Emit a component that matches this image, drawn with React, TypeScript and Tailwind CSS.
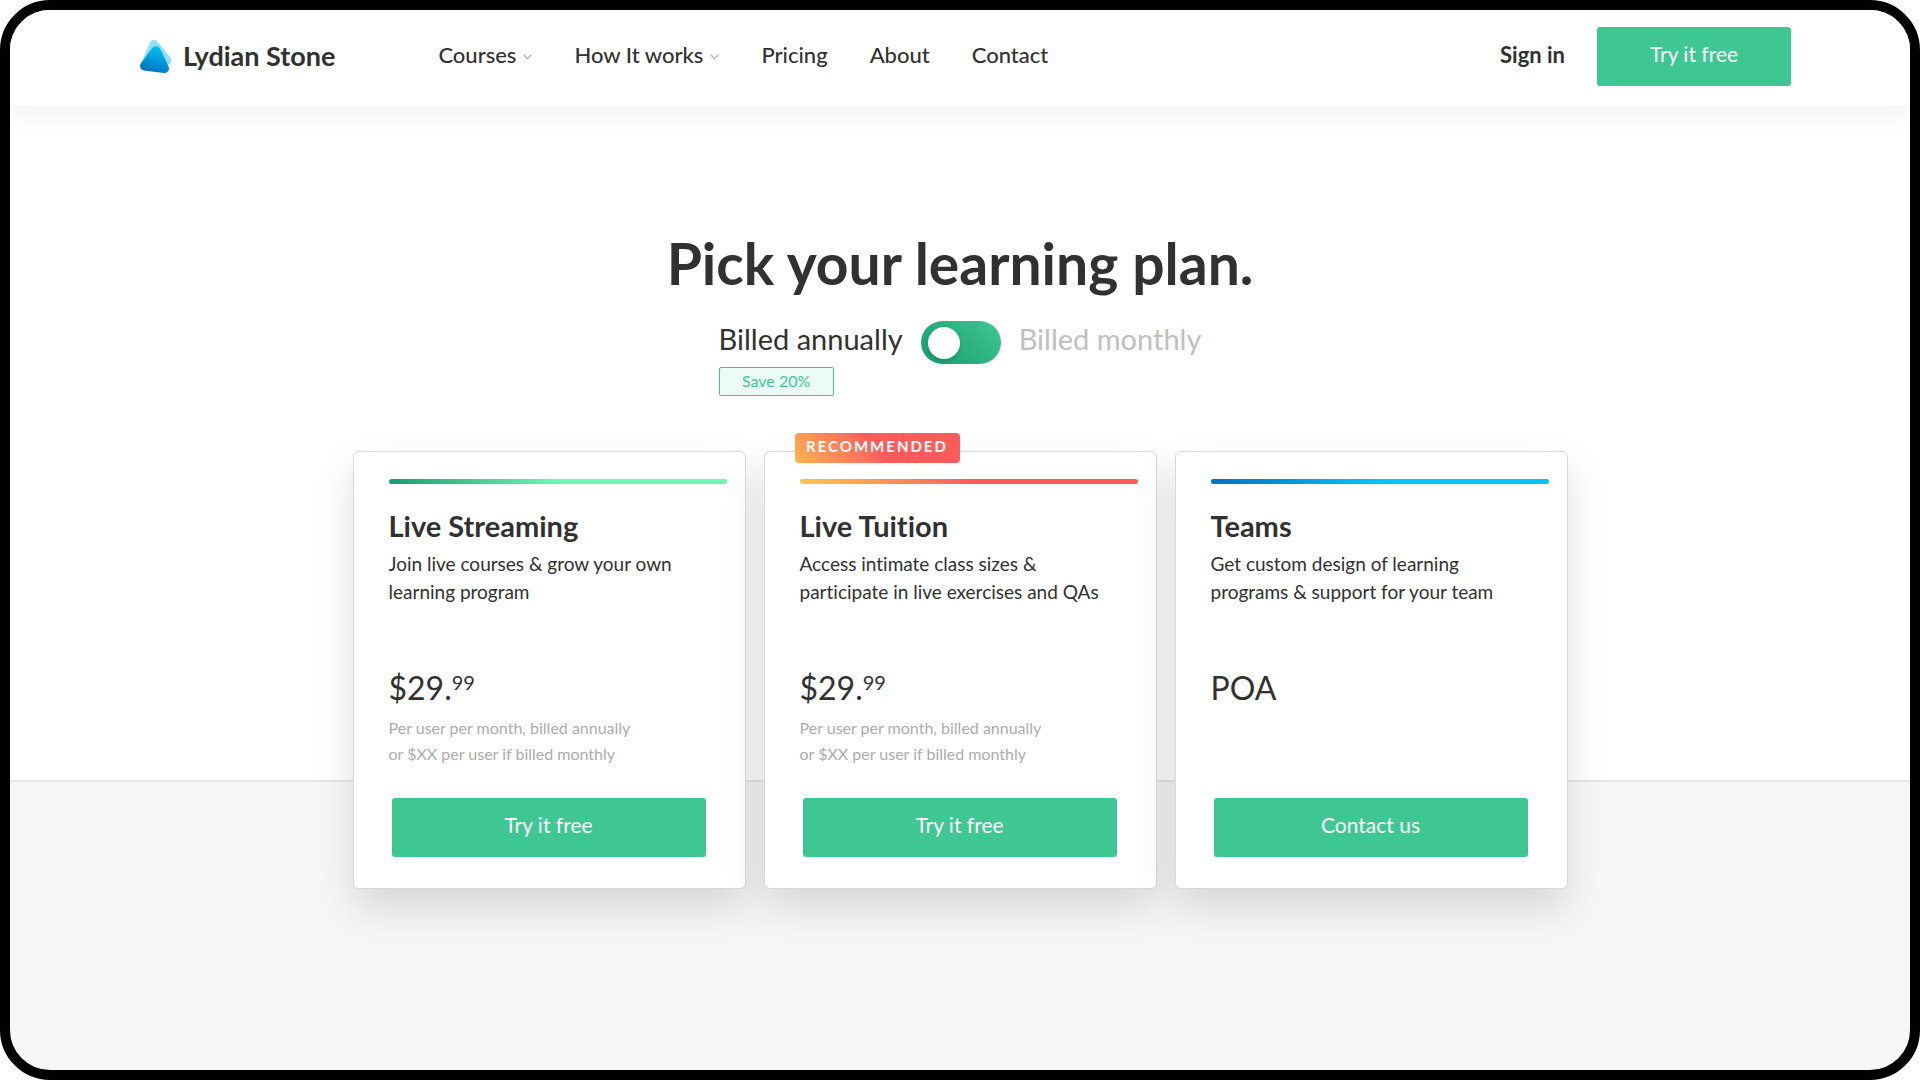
import React, { useState } from 'react';

interface Plan {
  name: string;
  description: string[];
  price: string;
  cents?: string;
  note: string[];
  action: string;
  bar: string;
  recommended?: boolean;
}

const plans: Plan[] = [
  {
    name: 'Live Streaming',
    description: ['Join live courses & grow your own', 'learning program'],
    price: '$29.',
    cents: '99',
    note: ['Per user per month, billed annually', 'or $XX per user if billed monthly'],
    action: 'Try it free',
    bar: 'bg-linear-45 from-[#139c6e] to-[#6ff7b7] to-50%',
  },
  {
    name: 'Live Tuition',
    description: ['Access intimate class sizes &', 'participate in live exercises and QAs'],
    price: '$29.',
    cents: '99',
    note: ['Per user per month, billed annually', 'or $XX per user if billed monthly'],
    action: 'Try it free',
    bar: 'bg-linear-45 from-[#ffc64a] to-[#ff5b5b] to-50%',
    recommended: true,
  },
  {
    name: 'Teams',
    description: ['Get custom design of learning', 'programs & support for your team'],
    price: 'POA',
    note: [],
    action: 'Contact us',
    bar: 'bg-linear-45 from-[#0071bc] to-[#00c6fb] to-50%',
  },
];

const navItems = [
  { label: 'Courses', hasMenu: true },
  { label: 'How It works', hasMenu: true },
  { label: 'Pricing', hasMenu: false },
  { label: 'About', hasMenu: false },
  { label: 'Contact', hasMenu: false },
];

const Logo: React.FC = () => (
  <svg className="h-[33px] w-8 shrink-0" viewBox="0 0 32 33" aria-hidden="true">
    <defs>
      <linearGradient id="logo-front" gradientUnits="userSpaceOnUse" x1="19" y1="6" x2="12" y2="33">
        <stop offset="0" stopColor="#00c6fb" />
        <stop offset="1" stopColor="#0071bc" />
      </linearGradient>
    </defs>
    <path
      d="M14 4.5 L6 23 L27 20.5 Z"
      fill="#92e0fd"
      stroke="#92e0fd"
      strokeWidth="9"
      strokeLinejoin="round"
    />
    <path
      d="M16 10.5 L4.5 26 L24.5 28.5 Z"
      fill="url(#logo-front)"
      stroke="url(#logo-front)"
      strokeWidth="9"
      strokeLinejoin="round"
    />
  </svg>
);

const Chevron: React.FC = () => (
  <svg className="mt-1 h-[6px] w-[9px]" viewBox="0 0 9 6" fill="none" aria-hidden="true">
    <path d="M1 1 L4.5 4.7 L8 1" stroke="#b5b5b5" strokeWidth="1.3" strokeLinecap="round" />
  </svg>
);

const Header: React.FC = () => (
  <header className="relative flex h-24 items-center bg-white pr-[119px] pb-[3px] pl-[130px] shadow-[0_10px_20px_rgba(0,0,0,0.05)]">
    <a href="#" className="flex items-center gap-[11px] text-[27px] font-bold">
      <Logo />
      Lydian Stone
    </a>
    <nav className="ml-[103px] flex items-center gap-[42px] pb-1 text-[22px] font-medium">
      {navItems.map((item) => (
        <a key={item.label} href="#" className="flex items-center gap-[7px]">
          {item.label}
          {item.hasMenu && <Chevron />}
        </a>
      ))}
    </nav>
    <div className="ml-auto flex items-center gap-8">
      <a href="#" className="pb-1 text-[22px] font-bold">
        Sign in
      </a>
      <button className="h-[59px] w-[194px] rounded-[3px] bg-[#3fc793] pb-[6px] text-[21px] text-white hover:bg-[#36b884]">
        Try it free
      </button>
    </div>
  </header>
);

const PlanCard: React.FC<{ plan: Plan }> = ({ plan }) => (
  <article className="relative flex w-[393px] flex-col rounded-md border border-[#d8d8d8] bg-white pt-[27px] pr-[18px] pb-[31px] pl-[35px] shadow-[0_20px_40px_rgba(0,0,0,0.13)]">
    {plan.recommended && (
      <span className="absolute -top-[19px] left-[30px] flex h-[30px] w-[165px] items-center justify-center rounded bg-linear-45 from-[#ffb44e] to-[#ff5b5b] to-50% pb-[3px] text-[15px] font-bold tracking-[2px] text-white">
        RECOMMENDED
      </span>
    )}
    <div className={`h-[5px] rounded-full ${plan.bar}`} />
    <h2 className="mt-6 text-[29px] leading-9 font-bold">{plan.name}</h2>
    <p className="mt-[6px] text-[19px] leading-7">
      {plan.description.map((line) => (
        <span key={line} className="block">
          {line}
        </span>
      ))}
    </p>
    <p className="mt-[60px] flex items-start text-[32px] leading-[44px]">
      {plan.price}
      {plan.cents && <sup className="top-0 text-[20px] leading-8">{plan.cents}</sup>}
    </p>
    <p className="mt-[5px] min-h-[52px] text-[16px] leading-[26px] text-[#acacac]">
      {plan.note.map((line) => (
        <span key={line} className="block">
          {line}
        </span>
      ))}
    </p>
    <button className="mt-[31px] mr-[21px] ml-[3px] h-[59px] rounded-[3px] bg-[#3fc793] pb-[6px] text-[21px] text-white hover:bg-[#36b884]">
      {plan.action}
    </button>
  </article>
);

export default function App() {
  const [monthly, setMonthly] = useState(false);

  return (
    <div className="flex min-h-screen flex-col overflow-hidden rounded-[50px] border-10 border-black bg-[#f7f7f7] font-['Lato',sans-serif] text-[#313131] [font-variant-ligatures:none]">
      <div className="border-b-2 border-[#e6e6e6] bg-white">
        <Header />
        <main className="flex flex-col items-center pt-[125px]">
          <h1 className="text-[57px] leading-[64px] font-bold">Pick your learning plan.</h1>

          <div className="mt-[26px] flex items-start gap-[18px] text-[29px] leading-9">
            <div>
              <label htmlFor="billing" className={monthly ? 'block text-[#bfbfbf]' : 'block'}>
                Billed annually
              </label>
              <span className="mt-[10px] flex h-[29px] w-[115px] items-center justify-center rounded-[2px] border border-[#3fc793] bg-[#edfbf6] pb-[2px] text-[16px] leading-5 text-[#3fc793]">
                Save 20%
              </span>
            </div>
            <input
              id="billing"
              type="checkbox"
              role="switch"
              checked={monthly}
              onChange={(e) => setMonthly(e.target.checked)}
              className="flex h-[43px] w-20 cursor-pointer appearance-none items-center rounded-full bg-linear-45 from-[#139c6e] to-[#3fc793] px-[7px] before:size-8 before:rounded-full before:bg-white before:shadow-[0_2px_4px_rgba(0,0,0,0.15)] checked:justify-end"
            />
            <label htmlFor="billing" className={monthly ? 'block' : 'block text-[#bfbfbf]'}>
              Billed monthly
            </label>
          </div>

          <section className="relative mt-[55px] -mb-[109px] flex flex-wrap justify-center gap-[18px]">
            {plans.map((plan) => (
              <PlanCard key={plan.name} plan={plan} />
            ))}
          </section>
        </main>
      </div>
    </div>
  );
}
